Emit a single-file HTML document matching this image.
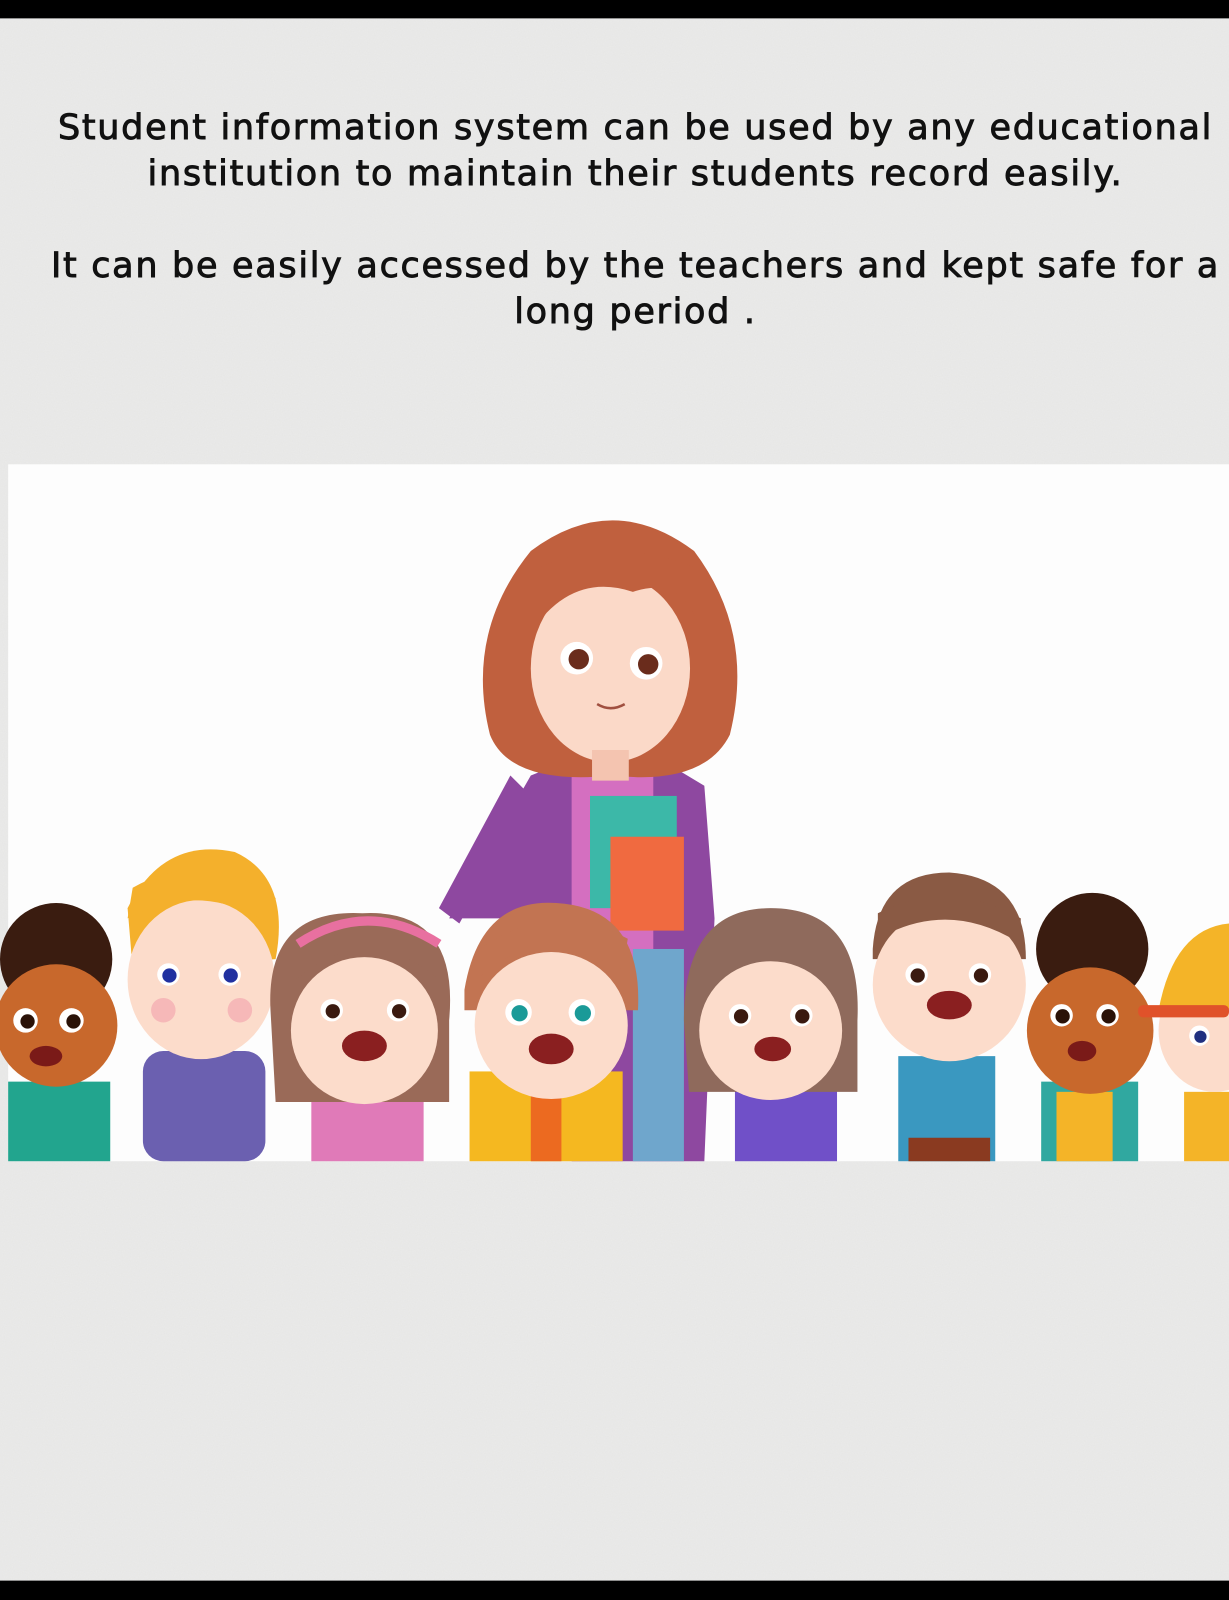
<!DOCTYPE html>
<html><head><meta charset="utf-8"><style>
html,body{margin:0;padding:0}
body{width:1229px;height:1600px;position:relative;overflow:hidden;background:#ebebea;font-family:"DejaVu Sans","Liberation Sans",sans-serif;}
.t{position:absolute;left:21px;width:1229px;text-align:center;color:#111;font-size:35px;line-height:46px;letter-spacing:1.7px;-webkit-text-stroke:0.9px #111;white-space:nowrap}
svg{position:absolute;left:0;top:0}
</style></head><body>
<svg width="1229" height="1600" viewBox="0 0 1204 1568" preserveAspectRatio="none">
<defs><filter id="n"><feTurbulence type="fractalNoise" baseFrequency="0.9" numOctaves="2" seed="3"/><feColorMatrix values="0 0 0 0 0.5  0 0 0 0 0.5  0 0 0 0 0.5  0 0 0 0.12 0"/></filter></defs>
<rect width="1204" height="1568" filter="url(#n)"/>
<rect x="8" y="455" width="1196" height="683" fill="#fdfdfd"/>
<!-- teacher -->
<path d="M440 900 L520 760 L570 740 L640 740 L690 770 L700 900 L690 1138 L560 1138 L530 900 Z" fill="#8e48a0"/>
<rect x="560" y="745" width="80" height="200" fill="#d46fc0"/>
<path d="M430 890 L500 760 L520 780 L450 905 Z" fill="#8e48a0"/>
<rect x="620" y="930" width="50" height="208" fill="#6fa6cc"/>
<path d="M520 540 Q600 480 680 540 Q740 620 715 720 Q690 770 600 760 Q500 770 480 720 Q455 620 520 540Z" fill="#c0603e"/>
<ellipse cx="598" cy="655" rx="78" ry="92" fill="#fbd9c8"/>
<path d="M520 620 Q560 560 620 580 Q680 560 690 640 L690 560 Q600 520 520 560Z" fill="#c0603e"/>
<rect x="580" y="735" width="36" height="30" fill="#f4c4b0"/>
<circle cx="565" cy="645" r="16" fill="#fff"/><circle cx="567" cy="646" r="10" fill="#6a2c1c"/>
<circle cx="633" cy="650" r="16" fill="#fff"/><circle cx="635" cy="651" r="10" fill="#6a2c1c"/>
<path d="M585 690 Q598 698 612 690" stroke="#a05040" stroke-width="2.5" fill="none"/>
<rect x="578" y="780" width="85" height="110" fill="#3cb8a8"/>
<rect x="598" y="820" width="72" height="92" fill="#f06a40"/>
<!-- kid 1 -->
<rect x="8" y="1060" width="100" height="78" fill="#22a58e"/>
<circle cx="55" cy="940" r="55" fill="#3a1c10"/>
<ellipse cx="55" cy="1005" rx="60" ry="60" fill="#c8682c"/>
<circle cx="25" cy="1000" r="12" fill="#fff"/><circle cx="70" cy="1000" r="12" fill="#fff"/>
<circle cx="27" cy="1001" r="7" fill="#2a1208"/><circle cx="72" cy="1001" r="7" fill="#2a1208"/>
<ellipse cx="45" cy="1035" rx="16" ry="10" fill="#7a1a18"/>
<!-- kid 2 -->
<rect x="140" y="1030" width="120" height="108" rx="20" fill="#6b60b0"/>
<path d="M125 890 Q160 820 230 835 Q285 860 270 940 L130 950Z" fill="#f4b02c"/>
<ellipse cx="197" cy="960" rx="72" ry="78" fill="#fcdccb"/>
<path d="M125 900 Q200 860 270 910 L270 880 Q200 830 130 870Z" fill="#f4b02c"/>
<circle cx="165" cy="955" r="11" fill="#fff"/><circle cx="225" cy="955" r="11" fill="#fff"/>
<circle cx="166" cy="956" r="7" fill="#2030a0"/><circle cx="226" cy="956" r="7" fill="#2030a0"/>
<circle cx="160" cy="990" r="12" fill="#f6b8b8"/><circle cx="235" cy="990" r="12" fill="#f6b8b8"/>
<!-- kid 3 -->
<rect x="305" y="1060" width="110" height="78" fill="#e07ab8"/>
<path d="M265 990 Q260 890 355 895 Q450 890 440 1000 L440 1080 L270 1080Z" fill="#9a6a58"/>
<ellipse cx="357" cy="1010" rx="72" ry="72" fill="#fcdccb"/>
<path d="M290 960 Q360 900 430 960 L430 930 Q360 880 290 930Z" fill="#9a6a58"/>
<path d="M292 925 Q360 880 430 925" stroke="#e870a0" stroke-width="9" fill="none"/>
<circle cx="325" cy="990" r="11" fill="#fff"/><circle cx="390" cy="990" r="11" fill="#fff"/>
<circle cx="326" cy="991" r="7" fill="#3a1a10"/><circle cx="391" cy="991" r="7" fill="#3a1a10"/>
<ellipse cx="357" cy="1025" rx="22" ry="15" fill="#8a1f20"/>
<!-- kid 4 -->
<rect x="460" y="1050" width="150" height="88" fill="#f5b820"/>
<rect x="520" y="1050" width="30" height="88" fill="#ec6a20"/>
<path d="M455 970 Q470 880 545 885 Q630 890 625 990 L455 990Z" fill="#c27452"/>
<ellipse cx="540" cy="1005" rx="75" ry="72" fill="#fcdccb"/>
<path d="M468 960 Q520 905 610 950 L615 920 Q540 880 470 930Z" fill="#c27452"/>
<circle cx="508" cy="992" r="13" fill="#fff"/><circle cx="570" cy="992" r="13" fill="#fff"/>
<circle cx="509" cy="993" r="8" fill="#1a9a98"/><circle cx="571" cy="993" r="8" fill="#1a9a98"/>
<ellipse cx="540" cy="1028" rx="22" ry="15" fill="#8a1f20"/>
<!-- kid 5 -->
<rect x="720" y="1060" width="100" height="78" fill="#7050c8"/>
<path d="M670 1000 Q670 890 755 890 Q845 890 840 1000 L840 1070 L675 1070Z" fill="#8f6a5c"/>
<ellipse cx="755" cy="1010" rx="70" ry="68" fill="#fcdccb"/>
<circle cx="725" cy="995" r="11" fill="#fff"/><circle cx="785" cy="995" r="11" fill="#fff"/>
<circle cx="726" cy="996" r="7" fill="#3a1a10"/><circle cx="786" cy="996" r="7" fill="#3a1a10"/>
<ellipse cx="757" cy="1028" rx="18" ry="12" fill="#8a1f20"/>
<!-- kid 6 -->
<rect x="880" y="1035" width="95" height="103" fill="#3a98c0"/>
<rect x="890" y="1115" width="80" height="23" fill="#8a3a20"/>
<path d="M855 930 Q860 855 930 855 Q1005 860 1005 940 L855 940Z" fill="#8a5a44"/>
<ellipse cx="930" cy="965" rx="75" ry="75" fill="#fcdccb"/>
<path d="M860 920 Q930 880 1000 925 L1000 900 Q930 860 860 895Z" fill="#8a5a44"/>
<circle cx="898" cy="955" r="11" fill="#fff"/><circle cx="960" cy="955" r="11" fill="#fff"/>
<circle cx="899" cy="956" r="7" fill="#3a1a10"/><circle cx="961" cy="956" r="7" fill="#3a1a10"/>
<ellipse cx="930" cy="985" rx="22" ry="14" fill="#8a1f20"/>
<!-- kid 7 -->
<rect x="1020" y="1060" width="95" height="78" fill="#30a8a0"/>
<rect x="1035" y="1070" width="55" height="68" fill="#f4b428"/>
<circle cx="1070" cy="930" r="55" fill="#3a1c10"/>
<ellipse cx="1068" cy="1010" rx="62" ry="62" fill="#c8682c"/>
<circle cx="1040" cy="995" r="11" fill="#fff"/><circle cx="1085" cy="995" r="11" fill="#fff"/>
<circle cx="1041" cy="996" r="7" fill="#2a1208"/><circle cx="1086" cy="996" r="7" fill="#2a1208"/>
<ellipse cx="1060" cy="1030" rx="14" ry="10" fill="#7a1a18"/>
<!-- kid 8 -->
<rect x="1160" y="1070" width="44" height="68" fill="#f4b428"/>
<ellipse cx="1190" cy="1010" rx="55" ry="60" fill="#fcdccb"/>
<path d="M1135 990 Q1150 910 1204 905 L1204 990Z" fill="#f4b428"/>
<rect x="1115" y="985" width="89" height="12" rx="5" fill="#e0522a"/>
<circle cx="1175" cy="1015" r="10" fill="#fff"/><circle cx="1176" cy="1016" r="6" fill="#203080"/>
<rect x="0" y="0" width="1204" height="18" fill="#000"/>
<rect x="0" y="1549" width="1204" height="19" fill="#000"/>
</svg>
<div class="t" style="top:105px">Student information system can be used by any educational<br>institution to maintain their students record easily.</div>
<div class="t" style="top:243px">It can be easily accessed by the teachers and kept safe for a<br>long period .</div>
</body></html>
